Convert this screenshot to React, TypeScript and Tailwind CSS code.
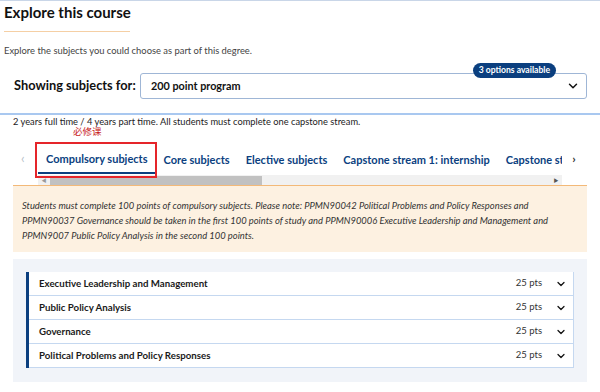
import { ChevronDown } from "lucide-react"

const subjects = [
  "Executive Leadership and Management",
  "Public Policy Analysis",
  "Governance",
  "Political Problems and Policy Responses",
]

const tabs = [
  "Compulsory subjects",
  "Core subjects",
  "Elective subjects",
  "Capstone stream 1: internship",
  "Capstone stream 2: research",
]

export default function App() {
  return (
    <div className="h-[392px] w-[600px] overflow-hidden bg-white text-[#222] [font-family:Lato,'Noto_Sans_CJK_SC',sans-serif]">
      {/* header panel */}
      <div className="border-t border-[#c9d6e8] border-b-2 border-b-[#a9c8f0] pb-[14px]">
        <h2 className="pl-[4px] pt-[1px] text-[15px] font-bold leading-[20px] text-[#111]">Explore this course</h2>
        <div className="ml-[4px] mt-[9px] h-px w-[126px] bg-[#f5cfa4]" />
        <p className="ml-[4px] mt-[13px] text-[9.4px] leading-[12px] text-[#444]">Explore the subjects you could choose as part of this degree.</p>
        <div className="mt-[16px] flex items-center pl-[14px] pr-[13px]">
          <span className="w-[126px] whitespace-nowrap text-[12.8px] font-bold text-[#111]">Showing subjects for:</span>
          <div className="relative flex h-[26px] flex-1 items-center justify-between rounded-[3px] border border-[#9fb6d6] pl-[10px] pr-[6px]">
            <span className="text-[10.8px] font-bold text-[#111]">200 point program</span>
            <ChevronDown className="h-[14px] w-[14px] text-[#111]" strokeWidth={2.5} />
            <span className="absolute -top-[11px] right-[30px] rounded-full bg-[#0b3f7f] px-[6px] py-[1px] text-[8.6px] font-bold leading-[13px] text-white">
              3 options available
            </span>
          </div>
        </div>
      </div>

      <p className="pl-[13px] pt-px text-[9.3px] leading-[11px] text-[#222]">
        2 years full time / 4 years part time. All students must complete one capstone stream.
      </p>
      <p className="pl-[73px] text-[9.5px] leading-[10px] text-[#c81e1e]">必修课</p>

      {/* tabs */}
      <div className="relative pt-[7px]">
        <div className="flex h-[30px] items-center pl-[21px]">
          <span className="w-[17px] text-left text-[13px] text-[#b7bfc9]">‹</span>
          <div className="flex h-[30px] w-[524px] overflow-hidden whitespace-nowrap">
            {tabs.map((t, i) => (
              <div
                key={t}
                className={
                  i === 0
                    ? "flex h-[30px] shrink-0 items-center border-b-2 border-[#0b3f7f] px-[8px] pt-[2px] text-[11px] font-bold text-[#0b3f7f]"
                    : "flex h-[30px] shrink-0 items-center px-[8px] pt-[2px] text-[11px] font-bold text-[#0b3f7f]"
                }
              >
                {t}
              </div>
            ))}
          </div>
          <span className="w-[24px] text-center text-[12px] font-bold text-[#333]">›</span>
        </div>
        {/* scrollbar */}
        <div className="ml-[38px] mt-[1px] flex h-[10px] w-[524px] items-center bg-[#f1f1f1]">
          <span className="w-[12px] text-center text-[5px] leading-none text-[#999]">◀</span>
          <div className="h-[9px] w-[212px] bg-[#c1c1c1]" />
          <div className="flex-1" />
          <span className="w-[12px] text-center text-[5px] leading-none text-[#555]">▶</span>
        </div>
        <div className="pointer-events-none absolute left-[35px] top-[5px] h-[36px] w-[122px] border-2 border-[#e5252a]" />
      </div>

      {/* notice */}
      <div className="mx-[13px] border-t border-[#f3b978] bg-[#fdf1e1] px-[9px] pb-[9px] pt-[12px]">
        <p className="text-[9.4px] italic leading-[15px] text-[#333]">
          Students must complete 100 points of compulsory subjects. Please note: PPMN90042 Political Problems and Policy Responses and PPMN90037 Governance should be taken in the first 100 points of study and PPMN90006 Executive Leadership and Management and PPMN9007 Public Policy Analysis in the second 100 points.
        </p>
      </div>

      {/* subject list */}
      <div className="mx-[13px] mt-[7px] bg-[#f1f4f9] px-[13px] pb-[14px] pt-[13px]">
        <div className="border-l-[3px] border-[#0b3f7f] border-r border-r-[#c5d8f0] bg-white">
          {subjects.map((s) => (
            <div key={s} className="flex h-[24px] items-center justify-between border-b border-[#c5d8f0] pl-[10px] pr-[6px]">
              <span className="text-[9.7px] font-bold text-[#1a1a1a]">{s}</span>
              <div className="flex items-center gap-[13px]">
                <span className="text-[9.5px] text-[#333]">25 pts</span>
                <ChevronDown className="h-[12px] w-[12px] text-[#111]" strokeWidth={2.5} />
              </div>
            </div>
          ))}
        </div>
      </div>
    </div>
  )
}
